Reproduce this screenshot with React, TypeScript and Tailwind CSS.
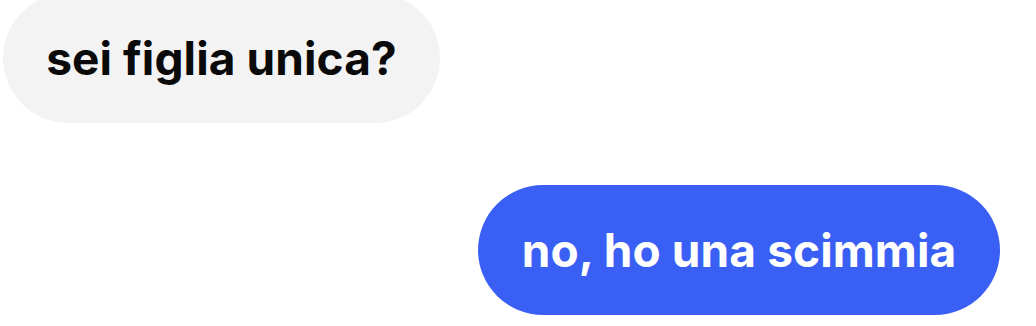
export default function App() {
  return (
    <div className="w-[1036px] h-[326px] overflow-hidden bg-white font-['Inter','Liberation_Sans',sans-serif]">
      <div className="flex flex-col">
        {/* received */}
        <div className="flex">
          <div className="-mt-[7px] ml-[3px] h-[130px] w-[437px] rounded-full bg-[#f3f3f3] flex items-center justify-center">
            <span className="text-[46px] font-bold text-[#0a0a0a] tracking-[0.1px]">sei figlia unica?</span>
          </div>
        </div>
        {/* sent */}
        <div className="flex justify-end pr-[36px] mt-[62px]">
          <div className="h-[130px] w-[522px] rounded-full bg-[#3a5ff5] flex items-center justify-center">
            <span className="text-[46px] font-bold text-white tracking-[0.1px]">no, ho una scimmia</span>
          </div>
        </div>
      </div>
    </div>
  );
}
